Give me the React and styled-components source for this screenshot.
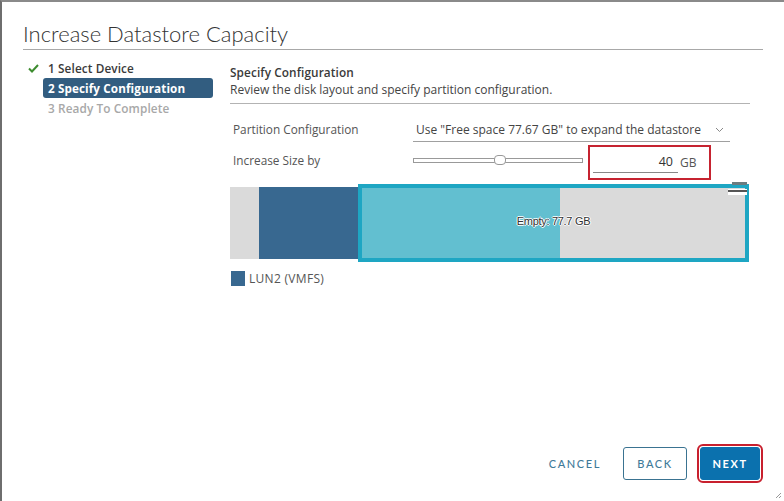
import styled, { createGlobalStyle } from "styled-components"

const GlobalStyle = createGlobalStyle`
  html, body { margin: 0; padding: 0; background: #fff; }
  body { font-family: "Open Sans", "Liberation Sans", sans-serif; color: #333; }
`

const Dialog = styled.div`
  box-sizing: border-box;
  width: 784px;
  height: 501px;
  border-top: 2px solid #8a8a8a;
  border-left: 2px solid #6e6e6e;
  display: flex;
  flex-direction: column;
  position: relative;
  background: #fff;
`

const Header = styled.header`
  margin: 0 21px;
  padding: 18px 0 1px;
  border-bottom: 1px solid #a8a8a8;
`

const Title = styled.h1`
  margin: 0;
  font-family: Lato, "Open Sans", sans-serif;
  font-size: 22px;
  line-height: 28px;
  font-weight: 300;
  color: #333;
`

const Body = styled.div`
  flex: 1;
  display: flex;
  gap: 17px;
  padding-left: 21px;
`

const Nav = styled.nav`
  width: 190px;
  padding-top: 8px;
  display: flex;
  flex-direction: column;
`

const Step = styled.div`
  display: flex;
  align-items: center;
  height: 20px;
`

const CheckSlot = styled.span`
  width: 20px;
  display: flex;
  justify-content: center;
`

const StepLabel = styled.span`
  flex: 1;
  height: 20px;
  line-height: 20px;
  padding-left: 5px;
  border-radius: 3px;
  font-size: ${(p) => (p.$active ? 11.7 : 11.8)}px;
  font-weight: ${(p) => (p.$active ? 700 : 600)};
  letter-spacing: 0.1px;
  color: ${(p) => (p.$active ? "#fff" : p.$muted ? "#a8a8a8" : "#3a3a3a")};
  background: ${(p) => (p.$active ? "#325d80" : "transparent")};
`

const Content = styled.section`
  width: 520px;
  padding-top: 14px;
`

const Heading = styled.h2`
  margin: 0;
  font-size: 11.8px;
  line-height: 16px;
  font-weight: 600;
  letter-spacing: 0.1px;
  color: #3a3a3a;
`

const Desc = styled.p`
  margin: 2px 0 0;
  padding-bottom: 5px;
  font-size: 12px;
  line-height: 16px;
  color: #444;
  border-bottom: 1px solid #b3b3b3;
`

const Form = styled.div`
  display: flex;
  flex-direction: column;
  gap: 5px;
  margin-top: 12px;
`

const Row = styled.div`
  display: flex;
  align-items: center;
  height: 26px;
`

const Label = styled.span`
  width: 180px;
  padding-left: 3px;
  font-size: 11.8px;
  color: #555;
`

const Select = styled.div`
  width: 317px;
  height: 24px;
  display: flex;
  align-items: center;
  justify-content: space-between;
  border-bottom: 1px solid #a0a0a0;
  box-sizing: border-box;
  margin-top: 2px;
  padding: 0 6px 0 3px;
  font-size: 12px;
  color: #444;
`

const Track = styled.div`
  position: relative;
  width: 170px;
  height: 5px;
  box-sizing: border-box;
  border: 1px solid #999;
  background: #fff;
`

const Thumb = styled.span`
  position: absolute;
  top: -4px;
  width: 12px;
  height: 10px;
  box-sizing: border-box;
  border: 1px solid #999;
  border-radius: 4px;
  background: #fff;
`

const SizeBox = styled.div`
  box-sizing: border-box;
  width: 123px;
  height: 35px;
  margin: 4px 0 0 5px;
  border: 2px solid #c62330;
  display: flex;
  align-items: center;
  padding: 0 0 0 3px;
  gap: 1px;
`

const SizeInput = styled.div`
  width: 85px;
  height: 20px;
  margin-top: 2px;
  border-bottom: 1px solid #888;
  box-sizing: border-box;
  text-align: right;
  padding-right: 5px;
  font-size: 12.5px;
  line-height: 18px;
  color: #333;
`

const Unit = styled.span`
  font-size: 12px;
  color: #555;
  padding-left: 1px;
`

const Bar = styled.div`
  display: flex;
  align-items: center;
  height: 78px;
  margin-top: 11px;
`

const Segment = styled.div`
  width: ${(p) => p.$w}px;
  height: 72px;
  background: ${(p) => p.$c};
`

const Selected = styled.div`
  position: relative;
  width: 391px;
  height: 78px;
  box-sizing: border-box;
  border: 4px solid #1ea6c3;
  display: flex;
`

const Fill = styled.div`
  width: ${(p) => p.$w}px;
  background: ${(p) => p.$c};
`

const BarText = styled.span`
  position: absolute;
  left: 0;
  right: 0;
  top: 27px;
  text-align: center;
  font-family: "Liberation Sans", Arial, sans-serif;
  font-size: 11px;
  letter-spacing: -0.3px;
  color: #333;
  text-shadow: 1px 0 0 #fff, -1px 0 0 #fff, 0 1px 0 #fff, 0 -1px 0 #fff;
`

const Handle = styled.span`
  position: absolute;
  right: -2px;
  top: -6px;
  width: 19px;
  height: 14px;
  display: flex;
  flex-direction: column;
  align-items: flex-end;
  gap: 4px;
  &::before {
    content: "";
    width: 15px;
    height: 3px;
    background: #6b7c80;
  }
  &::after {
    content: "";
    width: 19px;
    height: 6px;
    background: #fff;
    box-shadow: inset 0 1px 0 #fff, inset 0 3px 0 #555;
  }
`

const Legend = styled.div`
  display: flex;
  align-items: center;
  gap: 4px;
  margin-top: 8px;
  padding-left: 1px;
  font-size: 12px;
  letter-spacing: 0.3px;
  color: #555;
`

const Swatch = styled.span`
  width: 14px;
  height: 15px;
  background: #386890;
`

const Footer = styled.footer`
  display: flex;
  justify-content: flex-end;
  align-items: center;
  gap: 11px;
  padding: 0 24px 21px 0;
`

const Button = styled.button`
  height: 33px;
  box-sizing: border-box;
  padding: 0 ${(p) => (p.$flat ? 10 : 0)}px;
  width: ${(p) => (p.$w ? p.$w + "px" : "auto")};
  border-radius: 3px;
  font-family: Lato, "Open Sans", sans-serif;
  font-size: 11px;
  letter-spacing: 1.6px;
  font-weight: ${(p) => (p.$primary ? 700 : 500)};
  color: ${(p) => (p.$primary ? "#fff" : "#3f7a99")};
  background: ${(p) => (p.$primary ? "#0b71ae" : "#fff")};
  border: 1px solid ${(p) => (p.$primary ? "#0b71ae" : p.$flat ? "transparent" : "#3a7391")};
  outline: ${(p) => (p.$primary ? "2px solid #c8202e" : "none")};
  outline-offset: 1px;
  margin-left: ${(p) => (p.$primary ? 2 : 0)}px;
`

const Grip = styled.svg`
  position: absolute;
  right: 2px;
  bottom: 2px;
`

const Check = () => (
  <svg width="11" height="9" viewBox="0 0 11 9">
    <path d="M1 4.5 L4 7.5 L10 1" fill="none" stroke="#3d8c2f" strokeWidth="2" />
  </svg>
)

const Chevron = () => (
  <svg width="9" height="6" viewBox="0 0 9 6">
    <path d="M1 1 L4.5 4.5 L8 1" fill="none" stroke="#888" strokeWidth="1" />
  </svg>
)

const steps = [
  { label: "1 Select Device", done: true },
  { label: "2 Specify Configuration", active: true },
  { label: "3 Ready To Complete", muted: true },
]

export default function App() {
  return (
    <>
      <GlobalStyle />
      <Dialog>
        <Header>
          <Title>Increase Datastore Capacity</Title>
        </Header>
        <Body>
          <Nav>
            {steps.map((s) => (
              <Step key={s.label}>
                <CheckSlot>{s.done && <Check />}</CheckSlot>
                <StepLabel $active={s.active} $muted={s.muted}>
                  {s.label}
                </StepLabel>
              </Step>
            ))}
          </Nav>
          <Content>
            <Heading>Specify Configuration</Heading>
            <Desc>Review the disk layout and specify partition configuration.</Desc>
            <Form>
              <Row>
                <Label>Partition Configuration</Label>
                <Select>
                  <span>Use "Free space 77.67 GB" to expand the datastore</span>
                  <Chevron />
                </Select>
              </Row>
              <Row>
                <Label>Increase Size by</Label>
                <Track>
                  <Thumb style={{ left: "80px" }} />
                </Track>
                <SizeBox>
                  <SizeInput>40</SizeInput>
                  <Unit>GB</Unit>
                </SizeBox>
              </Row>
            </Form>
            <Bar>
              <Segment $w={29} $c="#dadada" />
              <Segment $w={99} $c="#386890" />
              <Selected>
                <Fill $w={198} $c="#62bfd0" />
                <Fill $w={185} $c="#dadada" />
                <BarText>Empty: 77.7 GB</BarText>
                <Handle />
              </Selected>
            </Bar>
            <Legend>
              <Swatch />
              LUN2 (VMFS)
            </Legend>
          </Content>
        </Body>
        <Footer>
          <Button $flat>CANCEL</Button>
          <Button $w={64}>BACK</Button>
          <Button $w={60} $primary>NEXT</Button>
        </Footer>
        <Grip width="8" height="8" viewBox="0 0 8 8">
          <path d="M7 2 L2 7 M7 5 L5 7" stroke="#999" strokeWidth="1" />
        </Grip>
      </Dialog>
    </>
  )
}
